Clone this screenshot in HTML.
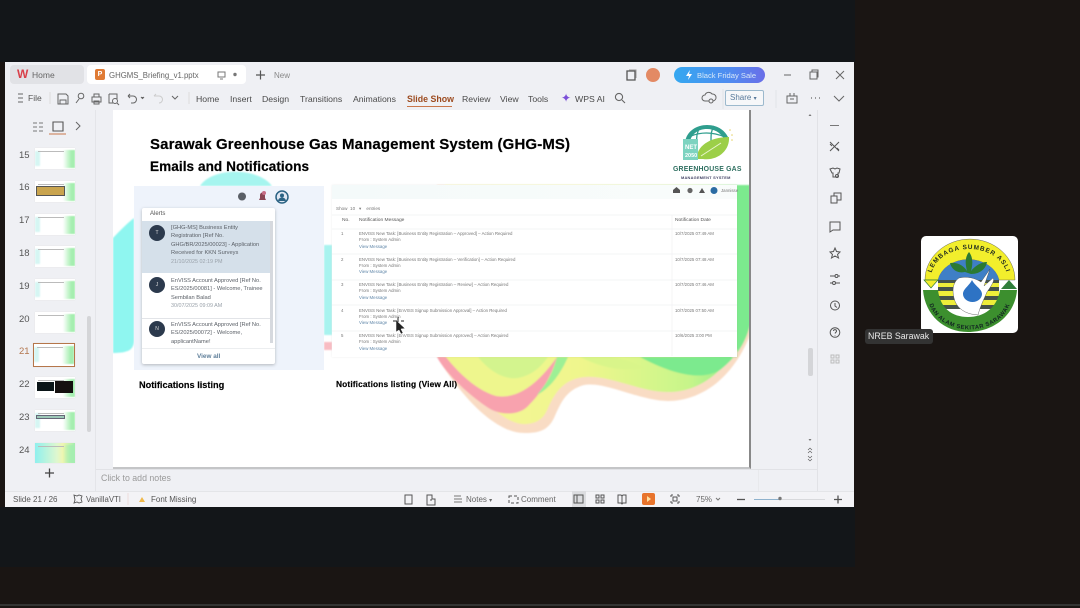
<!DOCTYPE html>
<html><head><meta charset="utf-8"><style>
*{box-sizing:border-box}
html,body{margin:0;padding:0;width:1080px;height:608px;overflow:hidden;background:#1a1513;font-family:"Liberation Sans",sans-serif}
#w{position:absolute;left:0;top:0;width:1080px;height:608px;overflow:hidden;filter:blur(.35px)}
.a{position:absolute;white-space:nowrap}
.t{position:absolute;white-space:nowrap;font-size:8.5px;color:#555;line-height:11px}
.m{position:absolute;white-space:nowrap;font-size:8.7px;color:#4a4a4a;line-height:12px}
.sb{position:absolute;white-space:nowrap;font-size:8px;color:#555;line-height:11px}
.n{position:absolute;left:19px;font-size:9.5px;color:#555;line-height:12px}
.th{position:absolute;left:35px;width:40px;height:21px;background:#fff;overflow:hidden;box-shadow:0 0 1px #ddd}
.th:before{content:"";position:absolute;right:0;top:2px;width:12px;height:18px;background:linear-gradient(90deg,rgba(170,240,180,0),#a5eeb0 70%);filter:blur(.6px)}
.th:after{content:"";position:absolute;left:3px;top:3px;width:26px;height:1px;background:#bbb}
.th b{position:absolute;left:0;top:3px;width:5px;height:15px;background:#d5f6f3;filter:blur(.8px)}
.al{position:absolute;left:171px;white-space:normal;font-size:5.7px;line-height:8.4px;color:#5c6168;width:99px}
.av{position:absolute;left:149px;width:16px;height:16px;border-radius:50%;background:#2c3a4d;color:#ddd;font-size:5px;line-height:16px;text-align:center}
.r{position:absolute;white-space:nowrap;font-size:4.35px;line-height:6.4px;color:#777}
.r i{font-style:normal;color:#5f86a8}
svg{position:absolute;overflow:visible}
</style></head><body><div id="w">
<div class="a" style="left:0;top:0;width:855px;height:62px;background:#131619"></div>
<div class="a" style="left:0;top:507px;width:855px;height:60px;background:#131619"></div>
<div class="a" style="left:0;top:604px;width:1080px;height:2px;background:#343433"></div>
<div class="a" style="left:5px;top:62px;width:849px;height:445px;background:#eff0f4"></div>

<!-- tabs -->
<div class="a" style="left:10px;top:65px;width:74px;height:19px;background:#e1e2e6;border-radius:4px"></div>
<div class="a" style="left:17px;top:67px;font:bold 12px 'Liberation Sans';color:#d9404a">W</div>
<div class="t" style="left:32px;top:70px;color:#666">Home</div>
<div class="a" style="left:87px;top:65px;width:159px;height:19px;background:#fff;border-radius:4px"></div>
<div class="a" style="left:95px;top:69px;width:10px;height:11px;background:#e07b35;border-radius:2px;color:#fff;font:bold 7px/11px 'Liberation Sans';text-align:center">P</div>
<div class="t" style="left:109px;top:70px;color:#666;font-size:7.8px">GHGMS_Briefing_v1.pptx</div>
<svg style="left:0;top:0" width="1" height="1" fill="none" stroke="#777" stroke-width="1">
<path d="M218 72h7v5h-7zM220 79h3"/><circle cx="235" cy="74.5" r="1.2" fill="#777"/>
<path d="M256 75h9M260.500 70.500v9" stroke="#555" stroke-width="1.200"/>
<path d="M627 71h8v9h-8z" stroke="#555" stroke-width="1.300"/><path d="M629 70h7v8" stroke="#999"/>
<path d="M784 75h7" stroke="#666"/><path d="M810 72h7v7h-7zM812 72v-2h6v7h-1" stroke="#666"/><path d="M836 71l8 8M844 71l-8 8" stroke="#666"/>
</svg>
<div class="t" style="left:274px;top:70px;font-size:8px;color:#888">New</div>
<div class="a" style="left:646px;top:68px;width:14px;height:14px;border-radius:50%;background:#e38a64"></div>
<div class="a" style="left:674px;top:67px;width:91px;height:16px;border-radius:8px;background:linear-gradient(90deg,#35a8f0,#4f8cf0 60%,#6a6ee8)"></div>
<svg style="left:0;top:0" width="1" height="1"><path d="M690 70l-4 6h3l-1 4 4-6h-3z" fill="#fff"/></svg>
<div class="t" style="left:697px;top:70px;font-size:7.600px;color:#d7e8f8">Black Friday Sale</div>

<!-- toolbar -->
<svg style="left:0;top:0" width="1" height="1" fill="none" stroke="#666" stroke-width="1">
<path d="M18 94h5M18 98h5M18 102h5"/><path d="M50 92v12" stroke="#ddd"/>
<path d="M58 94h8l2 2v8h-10zM60 100h6v4h-6z"/>
<path d="M76 103l3-4"/><circle cx="81" cy="96" r="2.800"/>
<path d="M92 97h9v5h-9zM94 97v-3h5v3M94 101h5v3h-5z"/>
<path d="M109 94h8v5M109 94v9h4"/><circle cx="115" cy="101" r="2.500"/><path d="M117 103l2 2"/>
<path d="M128 96l2-2m-2 2l2 2m-2-2h5a3 3 0 0 1 0 7h-2"/><path d="M141 97l1.500 1.500 1.500-1.500" fill="#666"/>
<path d="M154 96l2-2m-2 2h5a3 3 0 0 1 0 7" stroke="#ccc"/><path d="M172 96l3 3 3-3"/><path d="M189 92v12" stroke="#ddd"/>
<circle cx="619" cy="97" r="3.600" stroke-width="1.100"/><path d="M622 100l3 3" stroke-width="1.100"/>
<path d="M705 101a3 3 0 0 1 0-6 4 4 0 0 1 7-1 3.500 3.500 0 0 1 1 7z"/><circle cx="711" cy="101" r="2" fill="#eff0f4"/>
<path d="M787 96h10v7h-10zM790 93v3M794 93v3M790 99h4" />
<path d="M811 98h1M815 98h1M819 98h1" stroke-width="1.300"/><path d="M834 96l5 5 5-5"/>
<path d="M723 89v20M776 90v18" stroke="#e2e3e7"/>
<path d="M33 123h4M33 127h4M33 131h4M39 123h4M39 127h4M39 131h4" stroke="#777"/>
<path d="M53 122h10v9h-10z" stroke="#555" stroke-width="1.100"/><path d="M49 134h17" stroke="#c9774b"/>
<path d="M76 122l4 4-4 4"/>
</svg>
<div class="t" style="left:28px;top:93px;color:#555">File</div>
<div class="m" style="left:196px;top:93px">Home</div>
<div class="m" style="left:230px;top:93px">Insert</div>
<div class="m" style="left:262px;top:93px">Design</div>
<div class="m" style="left:300px;top:93px">Transitions</div>
<div class="m" style="left:353px;top:93px">Animations</div>
<div class="m" style="left:407px;top:93px;color:#9c4a1e;font-weight:bold;font-size:8.800px">Slide Show</div>
<div class="a" style="left:407px;top:106px;width:45px;height:1px;background:#c9774b"></div>
<div class="m" style="left:462px;top:93px">Review</div>
<div class="m" style="left:500px;top:93px">View</div>
<div class="m" style="left:528px;top:93px">Tools</div>
<div class="a" style="left:561px;top:91px;color:#7b4fd8;font-size:12px;line-height:14px">✦</div>
<div class="m" style="left:575px;top:93px">WPS AI</div>
<div class="a" style="left:725px;top:90px;width:39px;height:16px;border:1px solid #9cb9cd;border-radius:2px;background:#f6f7f9;color:#56789a;font-size:8px;line-height:14px;padding-left:4px">Share <span style="font-size:6px">▾</span></div>

<!-- thumbs -->
<div class="a" style="left:95px;top:110px;width:1px;height:381px;background:#e4e5e9"></div>
<div class="n" style="top:150px">15</div><div class="th" style="top:148px"><b></b></div>
<div class="n" style="top:182px">16</div><div class="th" style="top:181px"><div style="position:absolute;left:1px;top:5px;width:29px;height:10px;background:#c9a44e;border:1px solid #555"></div></div>
<div class="n" style="top:215px">17</div><div class="th" style="top:214px"><b></b></div>
<div class="n" style="top:248px">18</div><div class="th" style="top:246px"><b></b></div>
<div class="n" style="top:281px">19</div><div class="th" style="top:279px"><b></b></div>
<div class="n" style="top:314px">20</div><div class="th" style="top:312px"></div>
<div class="n" style="top:346px;color:#b3764e">21</div><div class="th" style="top:343px;left:33px;width:42px;height:24px;border:1.500px solid #b5764a"><b></b></div>
<div class="n" style="top:379px">22</div><div class="th" style="top:377px"><div style="position:absolute;left:2px;top:5px;width:17px;height:9px;background:#0b1518"></div><div style="position:absolute;left:20px;top:4px;width:18px;height:12px;background:#151010"></div></div>
<div class="n" style="top:412px">23</div><div class="th" style="top:410px"><b></b><div style="position:absolute;left:1px;top:5px;width:29px;height:4px;background:#9dc9b8;border:1px solid #667"></div></div>
<div class="n" style="top:445px">24</div><div class="th" style="top:443px;height:20px;background:linear-gradient(90deg,#8ff0ee,#dff7cf 55%,#f0f6b0 70%,#a5eeb0)"></div>
<div class="a" style="left:87px;top:316px;width:4px;height:116px;background:#d4d5d8;border-radius:2px"></div>
<svg style="left:0;top:0" width="1" height="1"><path d="M45 473h9M49.500 468.500v9" stroke="#444" stroke-width="1.300"/></svg>

<!-- slide -->
<div class="a" style="left:113px;top:110px;width:638px;height:359px;background:#fff;border-right:2px solid #888;border-bottom:2px solid #c4c5c7;overflow:hidden">
<svg style="left:0;top:0" width="638" height="359" viewBox="113 110 638 359">
<defs>
<linearGradient id="g2" x1="0" x2="1" y1="0" y2="0"><stop offset="0" stop-color="#f6f59a"/><stop offset=".45" stop-color="#eff68c"/><stop offset=".8" stop-color="#c7f58a"/><stop offset="1" stop-color="#7feb8e"/></linearGradient>
<filter id="b"><feGaussianBlur stdDeviation=".8"/></filter>
</defs>
<g filter="url(#b)">
<path d="M113 353C128 353 134 350 134 340V218Q125 225 113 238Z" fill="#8ff6f0"/>
<path d="M200 186C212 167 258 167 272 186Z" fill="#a6f5ef"/>
<path d="M324 245h8v90h-8z" fill="#a8f3ef"/><path d="M324 342h8v8h-8z" fill="#f8bcc3"/>
<path d="M437 357C450 378 470 405 491 420C505 430 515 433 525 433C540 433 548 430 554 418C560 405 565 390 584 385C605 381 640 401 668 401C695 401 730 385 750 335V185H437Z" fill="#f9dcc4"/>
<path d="M445 357C458 378 478 400 497 412C510 422 520 425 527 424C538 423 544 418 548 408C556 390 566 378 586 377C610 375 640 392 668 392C695 392 725 378 750 325V185H445Z" fill="url(#g2)"/>
<path d="M437 357C445 372 465 392 487 407C500 416 520 416 529 405C542 392 552 375 557 357Z" fill="#f8a2ae"/>
<path d="M446 357C456 370 475 390 496 396C515 399 535 388 557 357Z" fill="#eef68d"/>
<path d="M478 357C490 372 505 380 518 378C532 375 540 368 548 357Z" fill="#d3f48e"/>
<path d="M557 357L568 357C560 375 550 388 537 395C548 382 553 372 557 357Z" fill="#9df095"/>
<path d="M640 357C670 373 700 382 720 370C735 358 745 345 750 325V185H737V357Z" fill="#7bea8e"/>
<path d="M580 357C600 367 620 372 645 368C630 360 620 358 610 357Z" fill="#d9f58a"/>
</g>
</svg>
<div class="a" style="left:37px;top:25.500px;font:bold 15px 'Liberation Sans';color:#000;letter-spacing:.12px;-webkit-text-stroke:.2px #000">Sarawak Greenhouse Gas Management System (GHG-MS)</div>
<div class="a" style="left:37px;top:49px;font:bold 13.600px 'Liberation Sans';color:#000;letter-spacing:.05px;-webkit-text-stroke:.2px #000">Emails and Notifications</div>
</div>

<!-- logo -->
<svg style="left:683px;top:123px" width="52" height="38" viewBox="0 0 52 38">
<path d="M2 20C3 8 14 2 24 2C33 2 41 6 45 14L41 16C37 9 31 6 24 6C15 6 9 11 7 18Z" fill="#2f9e8e"/>
<path d="M8 13C18 9 30 9 42 14M17 4C14 9 13 14 14 20M31 3C28 8 28 11 28 18" stroke="#2f9e8e" stroke-width="1.300" fill="none"/>
<path d="M14 36C13 24 26 14 46 14C47 28 34 38 20 36Z" fill="#9ccf48"/>
<path d="M0 16h15v21h-15z" fill="#7dd3c0"/>
<path d="M18 33L38 20" stroke="#e9f5cf" stroke-width="1"/>
<circle cx="47" cy="7" r=".8" fill="#e6d36a"/><circle cx="49" cy="12" r=".8" fill="#e6d36a"/><circle cx="49" cy="17" r=".8" fill="#e6d36a"/>
<text x="2" y="26" font-family="Liberation Sans" font-size="6" font-weight="bold" fill="#fff">NET</text>
<text x="2" y="34" font-family="Liberation Sans" font-size="5.500" font-weight="bold" fill="#fff">2050</text>
</svg>
<div class="a" style="left:673px;top:166px;font:bold 6.900px/8px 'Liberation Sans';color:#2e6f60;letter-spacing:.2px">GREENHOUSE GAS</div>
<div class="a" style="left:681px;top:174.500px;font:bold 3.900px/5px 'Liberation Sans';color:#446;letter-spacing:.25px">MANAGEMENT SYSTEM</div>

<!-- left panel -->
<div class="a" style="left:134px;top:186px;width:190px;height:184px;background:#eef3fb"></div>
<svg style="left:0;top:0" width="1" height="1">
<circle cx="242" cy="196.500" r="4" fill="#5a5f66"/>
<path d="M259 200h7l-1-2v-3a2.500 2.500 0 0 0-5 0v3z" fill="#8a4654"/><circle cx="264" cy="193" r="2" fill="#c76d86"/>
<circle cx="282" cy="197" r="6" fill="#dfe7f2" stroke="#2a6283" stroke-width="1.500"/><circle cx="282" cy="195.500" r="2" fill="#2a6283"/><path d="M278 201a4 3.500 0 0 1 8 0z" fill="#2a6283"/>
</svg>
<div class="a" style="left:142px;top:208px;width:133px;height:156px;background:#fff;box-shadow:0 1px 3px rgba(0,0,0,.25);border-radius:2px"></div>
<div class="a" style="left:150px;top:210px;font-size:6px;line-height:9px;color:#555">Alerts</div>
<div class="a" style="left:142px;top:221px;width:128px;height:52px;background:#d5e0ea"></div>
<div class="a" style="left:270px;top:221px;width:3px;height:122px;background:#d6d9de"></div>
<div class="a" style="left:142px;top:318px;width:128px;height:1px;background:#e2e4e8"></div>
<div class="a" style="left:142px;top:348px;width:133px;height:1px;background:#eceef0"></div>
<div class="av" style="top:225px">T</div><div class="av" style="top:277px">J</div><div class="av" style="top:321px">N</div>
<div class="al" style="top:224px">[GHG-MS] Business Entity<br>Registration [Ref No.<br>GHG/BR/2025/00023] - Application<br>Received for KKN Surveys<br><span style="color:#9aa2aa;font-size:5.400px">21/10/2025 02:19 PM</span></div>
<div class="al" style="top:277px">EnVISS Account Approved [Ref No.<br>ES/2025/00081] - Welcome, Trainee<br>Sembilan Balad<br><span style="color:#9aa2aa;font-size:5.400px">30/07/2025 09:09 AM</span></div>
<div class="al" style="top:321px">EnVISS Account Approved [Ref No.<br>ES/2025/00072] - Welcome,<br>applicantName!</div>
<div class="a" style="left:197px;top:352px;font-size:6.400px;line-height:9px;color:#5f7f9a;font-weight:bold">View all</div>
<div class="a" style="left:139px;top:380px;font:bold 9.200px/11px 'Liberation Sans';color:#000;-webkit-text-stroke:.15px #000">Notifications listing</div>

<!-- right panel -->
<div class="a" style="left:332px;top:185px;width:405px;height:172px;background:#fff;box-shadow:0 0 2px rgba(0,0,0,.08)"></div>
<div class="a" style="left:332px;top:185px;width:405px;height:14px;background:linear-gradient(90deg,#f4fafa,#f9fcfb)"></div>
<svg style="left:0;top:0" width="1" height="1">
<path d="M673 190l3.500-3 3.500 3v3h-7z" fill="#555"/><circle cx="690" cy="190.500" r="2.600" fill="#666"/><path d="M699 193l3-5 3 5z" fill="#555"/>
<circle cx="714" cy="190.500" r="3.500" fill="#2b6ca3"/>
<path d="M332 215H737M332 229H737M332 254H737M332 280H737M332 305H737M332 331H737M672 215V356" stroke="#f0f1f3" stroke-width=".7"/>
<path d="M396 320l0 12 3-2 2 4 2-1-2-4 4-.5z" fill="#222" stroke="#fff" stroke-width=".5"/>
<path d="M398 317v5M393 321h4M401 321h3" stroke="#222" stroke-width="1"/>
</svg>
<div class="r" style="left:721px;top:187.500px">Jannisse</div>
<div class="r" style="left:336px;top:206px;font-size:4.600px">Show &nbsp;10 &nbsp;&nbsp;▾ &nbsp;&nbsp;&nbsp;entries</div>
<div class="r" style="left:342px;top:218px;font-size:4.900px;color:#555">No.</div>
<div class="r" style="left:359px;top:218px;font-size:4.900px;color:#555">Notification Message</div>
<div class="r" style="left:675px;top:218px;font-size:4.900px;color:#555">Notification Date</div>
<div class="r" style="left:341px;top:231px">1</div><div class="r" style="left:359px;top:231px">ENVISS New Task: [Business Entity Registration – Approved] – Action Required<br>From : System Admin<br><i>View Message</i></div><div class="r" style="left:675px;top:231px">10/7/2025 07:49 AM</div>
<div class="r" style="left:341px;top:256.500px">2</div><div class="r" style="left:359px;top:256.500px">ENVISS New Task: [Business Entity Registration – Verification] – Action Required<br>From : System Admin<br><i>View Message</i></div><div class="r" style="left:675px;top:256.500px">10/7/2025 07:48 AM</div>
<div class="r" style="left:341px;top:282px">3</div><div class="r" style="left:359px;top:282px">ENVISS New Task: [Business Entity Registration – Review] – Action Required<br>From : System Admin<br><i>View Message</i></div><div class="r" style="left:675px;top:282px">10/7/2025 07:46 AM</div>
<div class="r" style="left:341px;top:307.500px">4</div><div class="r" style="left:359px;top:307.500px">ENVISS New Task: [EnVISS Signup Submission Approval] – Action Required<br>From : System Admin<br><i>View Message</i></div><div class="r" style="left:675px;top:307.500px">10/7/2025 07:50 AM</div>
<div class="r" style="left:341px;top:333px">5</div><div class="r" style="left:359px;top:333px">ENVISS New Task: [EnVISS Signup Submission Approved] – Action Required<br>From : System Admin<br><i>View Message</i></div><div class="r" style="left:675px;top:333px">10/6/2025 3:00 PM</div>
<div class="a" style="left:336px;top:379px;font:bold 8.400px/11px 'Liberation Sans';color:#000;letter-spacing:.12px;-webkit-text-stroke:.15px #000">Notifications listing (View All)</div>

<!-- right rail -->
<div class="a" style="left:817px;top:110px;width:1px;height:381px;background:#e1e2e6"></div>
<div class="a" style="left:758px;top:469px;width:1px;height:22px;background:#e8e9ec"></div>
<div class="a" style="left:808px;top:348px;width:5px;height:28px;background:#d4d5d8;border-radius:2px"></div>
<svg style="left:0;top:0" width="1" height="1" fill="none" stroke="#555" stroke-width="1">
<path d="M830 125.500h9" stroke="#777"/>
<path d="M830 142l9 9M839 142l-9 9M832 146l-2-2M837 148l2 2"/>
<path d="M830 169l3-1 2 1 2-1 3 1-1 4h-1v4h-5v-4h-1z"/><circle cx="837" cy="176" r="1.500"/>
<path d="M831 196h6v7h-6zM834 196v-3h7v7h-4"/>
<path d="M830 222h10v8h-7l-3 2z"/>
<path d="M835 248l1.500 3.500 3.500.5-2.500 2.500 1 3.500-3.500-2-3.500 2 1-3.500-2.500-2.500 3.500-.5z"/>
<path d="M830 276h5M838 276h2M830 283h2M836 283h4"/><circle cx="836.500" cy="276" r="1.500"/><circle cx="834" cy="283" r="1.500"/>
<circle cx="835" cy="305.500" r="4.500"/><path d="M835 303v3l2 1.500"/>
<circle cx="835" cy="332.500" r="4.800"/><path d="M833.500 331a1.500 1.500 0 1 1 2 1.500l-.5 1M835 335.500v.5"/>
<path d="M831 355h3v3h-3zM836 355h3v3h-3zM831 360h3v3h-3zM836 360h3v3h-3z" stroke="#bbb"/>
<path d="M808.500 116l1.500-2 1.500 2z M808.500 439l1.500 2 1.500-2z" fill="#777" stroke="none"/>
<path d="M808 450l2-2 2 2M808 453l2-2 2 2M808 459l2 2 2-2M808 456l2 2 2-2" stroke-width=".6"/>
</svg>

<!-- notes -->
<div class="a" style="left:96px;top:469px;width:721px;height:1px;background:#e1e2e6"></div>
<div class="t" style="left:101px;top:473px;font-size:8.800px;color:#9a9a9a">Click to add notes</div>

<!-- status -->
<div class="a" style="left:5px;top:491px;width:849px;height:16px;background:#f3f3f6;border-top:1px solid #e4e5e8"></div>
<div class="sb" style="left:13px;top:494px">Slide 21 / 26</div>
<div class="sb" style="left:86px;top:494px;font-size:7.800px">VanillaVTI</div>
<div class="sb" style="left:151px;top:494px">Font Missing</div>
<div class="sb" style="left:466px;top:494px;color:#666">Notes <span style="font-size:6px">▾</span></div>
<div class="sb" style="left:521px;top:494px;color:#666">Comment</div>
<div class="sb" style="left:696px;top:494px;color:#666">75%</div>
<div class="a" style="left:572px;top:491px;width:14px;height:16px;background:#dcdde0"></div>
<div class="a" style="left:642px;top:493px;width:13px;height:12px;background:#e8742c;border-radius:2px"></div>
<svg style="left:0;top:0" width="1" height="1" fill="none" stroke="#555" stroke-width="1">
<path d="M74 495l3 1 2-1 3 1-1 3 1 3-3 1-2-1-3 1 1-3z" stroke-width=".9"/>
<path d="M139 502l3-5 3 5z" fill="#f0b84a" stroke="none"/><path d="M128 493v12" stroke="#eedcdc"/>
<path d="M405 495h7v9h-7z"/><path d="M427 495h5v4h3v6h-8zM430 500h2"/>
<path d="M454 496h7M454 499h8M454 502h8" stroke="#777"/>
<path d="M509 496h9v7h-9z" stroke-dasharray="3 2"/>
<path d="M574 495h9v8h-9zM577 495v8"/>
<path d="M596 495h3v3h-3zM601 495h3v3h-3zM596 500h3v3h-3zM601 500h3v3h-3z"/>
<path d="M618 495h3l1 1 1-1h3v8h-3l-1 1-1-1h-3zM622 496v7"/>
<path d="M647 496l4 3-4 3z" fill="#ffe0a0" stroke="none"/>
<path d="M671 495h2M671 495v2M679 495h-2M679 495v2M671 503h2M671 503v-2M679 503h-2M679 503v-2"/><path d="M673 497h4v4h-4z"/>
<path d="M716 498l2 2 2-2" stroke="#777"/>
<path d="M737 499.500h8" stroke-width="1.300"/>
<path d="M754 499.500h26" stroke="#8fb2cd" stroke-width="1"/><path d="M780 499.500h45" stroke="#d8d9dc"/>
<circle cx="780" cy="498.500" r="1.700" fill="#777" stroke="none"/>
<path d="M834 499.500h8M838 495.500v8" stroke-width="1.300"/>
</svg>

<!-- NREB logo -->
<div class="a" style="left:921px;top:236px;width:97px;height:97px;background:#fff;border-radius:5px"></div>
<svg style="left:921px;top:236px" width="97" height="97" viewBox="0 0 97 97">
<defs><path id="arc1" d="M10 42A38 29 0 0 1 86 42"/><path id="arc2" d="M7 60A41 33 0 0 0 90 60"/></defs>
<path d="M4 44A44 40 0 0 1 94 44H78A31 25 0 0 0 17 44Z" fill="#f2ee2c" stroke="#444" stroke-width=".4"/>
<path d="M17 44A31 25 0 0 1 78 44Z" fill="#3f7fc6"/>
<path d="M17 44h61v29H17z" fill="#46534a"/>
<path d="M17 47h61v4H17zM17 55h61v5H17zM19 64h57v5H19z" fill="#eeee3a"/>
<path d="M2 54H17C19 72 31 81 47 81C63 81 76 72 79 54H96C94 79 73 96 47 96C23 96 4 79 2 54Z" fill="#3c8f2e"/>
<path d="M3 44h14l-7 8z" fill="#f2ee2c" stroke="#2b7a33" stroke-width=".7"/>
<path d="M80 53l8-9 8 9z" fill="#2f7d3a"/>
<path d="M44 36C34 38 30 31 29 27C37 26 43 30 46 35C44 27 44 21 48 16C52 21 52 28 50 35C54 30 60 26 66 26C65 32 60 38 50 38Z" fill="#2b7a33"/>
<path d="M38 42C32 46 31 54 33 62C35 71 42 76 50 78L57 79C59 71 63 63 66 56C71 49 74 44 72 42L63 50L69 33L60 46C54 42 46 40 38 42Z" fill="#fff" stroke="#444" stroke-width=".4"/>
<path d="M51 44C48 50 42 53 42 58A9.500 8 0 0 0 61 58C61 53 54 50 51 44Z" fill="#2e73c4"/>
<text font-family="Liberation Sans" font-weight="bold" font-size="6.400" fill="#1f2a20" letter-spacing=".9" text-anchor="middle"><textPath href="#arc1" startOffset="50%">LEMBAGA SUMBER ASLI</textPath></text>
<text font-family="Liberation Sans" font-weight="bold" font-size="5.800" fill="#122" letter-spacing=".5" text-anchor="middle"><textPath href="#arc2" startOffset="50%">DAN ALAM SEKITAR SARAWAK</textPath></text>
</svg>
<div class="a" style="left:865px;top:329px;width:68px;height:15px;background:#333;border-radius:3px;color:#e8e8e8;font-size:8.800px;line-height:15px;padding-left:3px">NREB Sarawak</div>
</div></body></html>
